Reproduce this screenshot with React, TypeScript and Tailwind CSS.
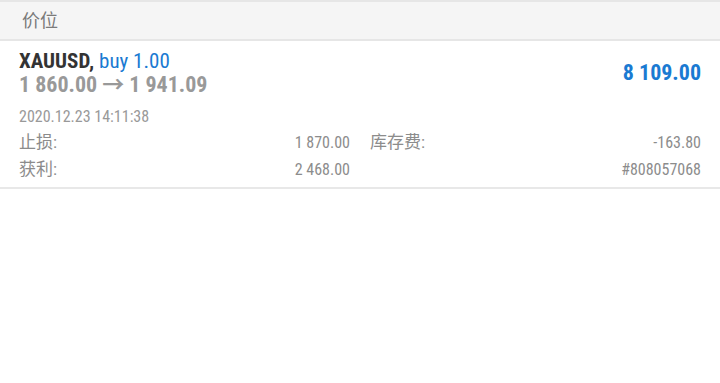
import React from "react";

const font = { fontFamily: "'Roboto Condensed', Roboto, 'Noto Sans CJK SC', sans-serif" };

const Row: React.FC<{ label: string; value: string; label2: string; value2: string }> = ({ label, value, label2, value2 }) => {
  return (
    <div className="flex items-center h-[27px] text-[16px] text-[#8c8c8c]">
      <div className="w-[331px] flex justify-between items-center">
        <span className="text-[17px]">{label}</span>
        <span>{value}</span>
      </div>
      <div className="flex-1 flex justify-between items-center pl-[20px]">
        <span className="text-[17px]">{label2}</span>
        <span>{value2}</span>
      </div>
    </div>
  );
};

const App: React.FC = () => {
  return (
    <div className="w-[720px] h-[383px] bg-white" style={font}>
      <div className="h-[41px] bg-[#f5f5f5] border-t-2 border-b-2 border-[#e6e6e6] flex items-center px-[22px]">
        <p className="text-[18px] text-[#7a7a7a]">价位</p>
      </div>
      <div className="px-[19px] pt-[8px] pb-[4px] border-b-2 border-[#e8e8e8]">
        <div className="flex justify-between items-center">
          <div>
            <p className="text-[21px] leading-[24px] font-bold text-[#333333]">
              XAUUSD, <span className="font-normal text-[#1a7ad2]">buy 1.00</span>
            </p>
            <p className="text-[22px] leading-[24px] font-bold text-[#999999]">1 860.00 → 1 941.09</p>
          </div>
          <p className="text-[22px] leading-[24px] font-bold text-[#1a7ad2]">8 109.00</p>
        </div>
        <p className="mt-[8px] text-[16px] leading-[24px] text-[#999999]">2020.12.23 14:11:38</p>
        <Row label="止损:" value="1 870.00" label2="库存费:" value2="-163.80" />
        <Row label="获利:" value="2 468.00" label2="" value2="#808057068" />
      </div>
    </div>
  );
};

export default App;
